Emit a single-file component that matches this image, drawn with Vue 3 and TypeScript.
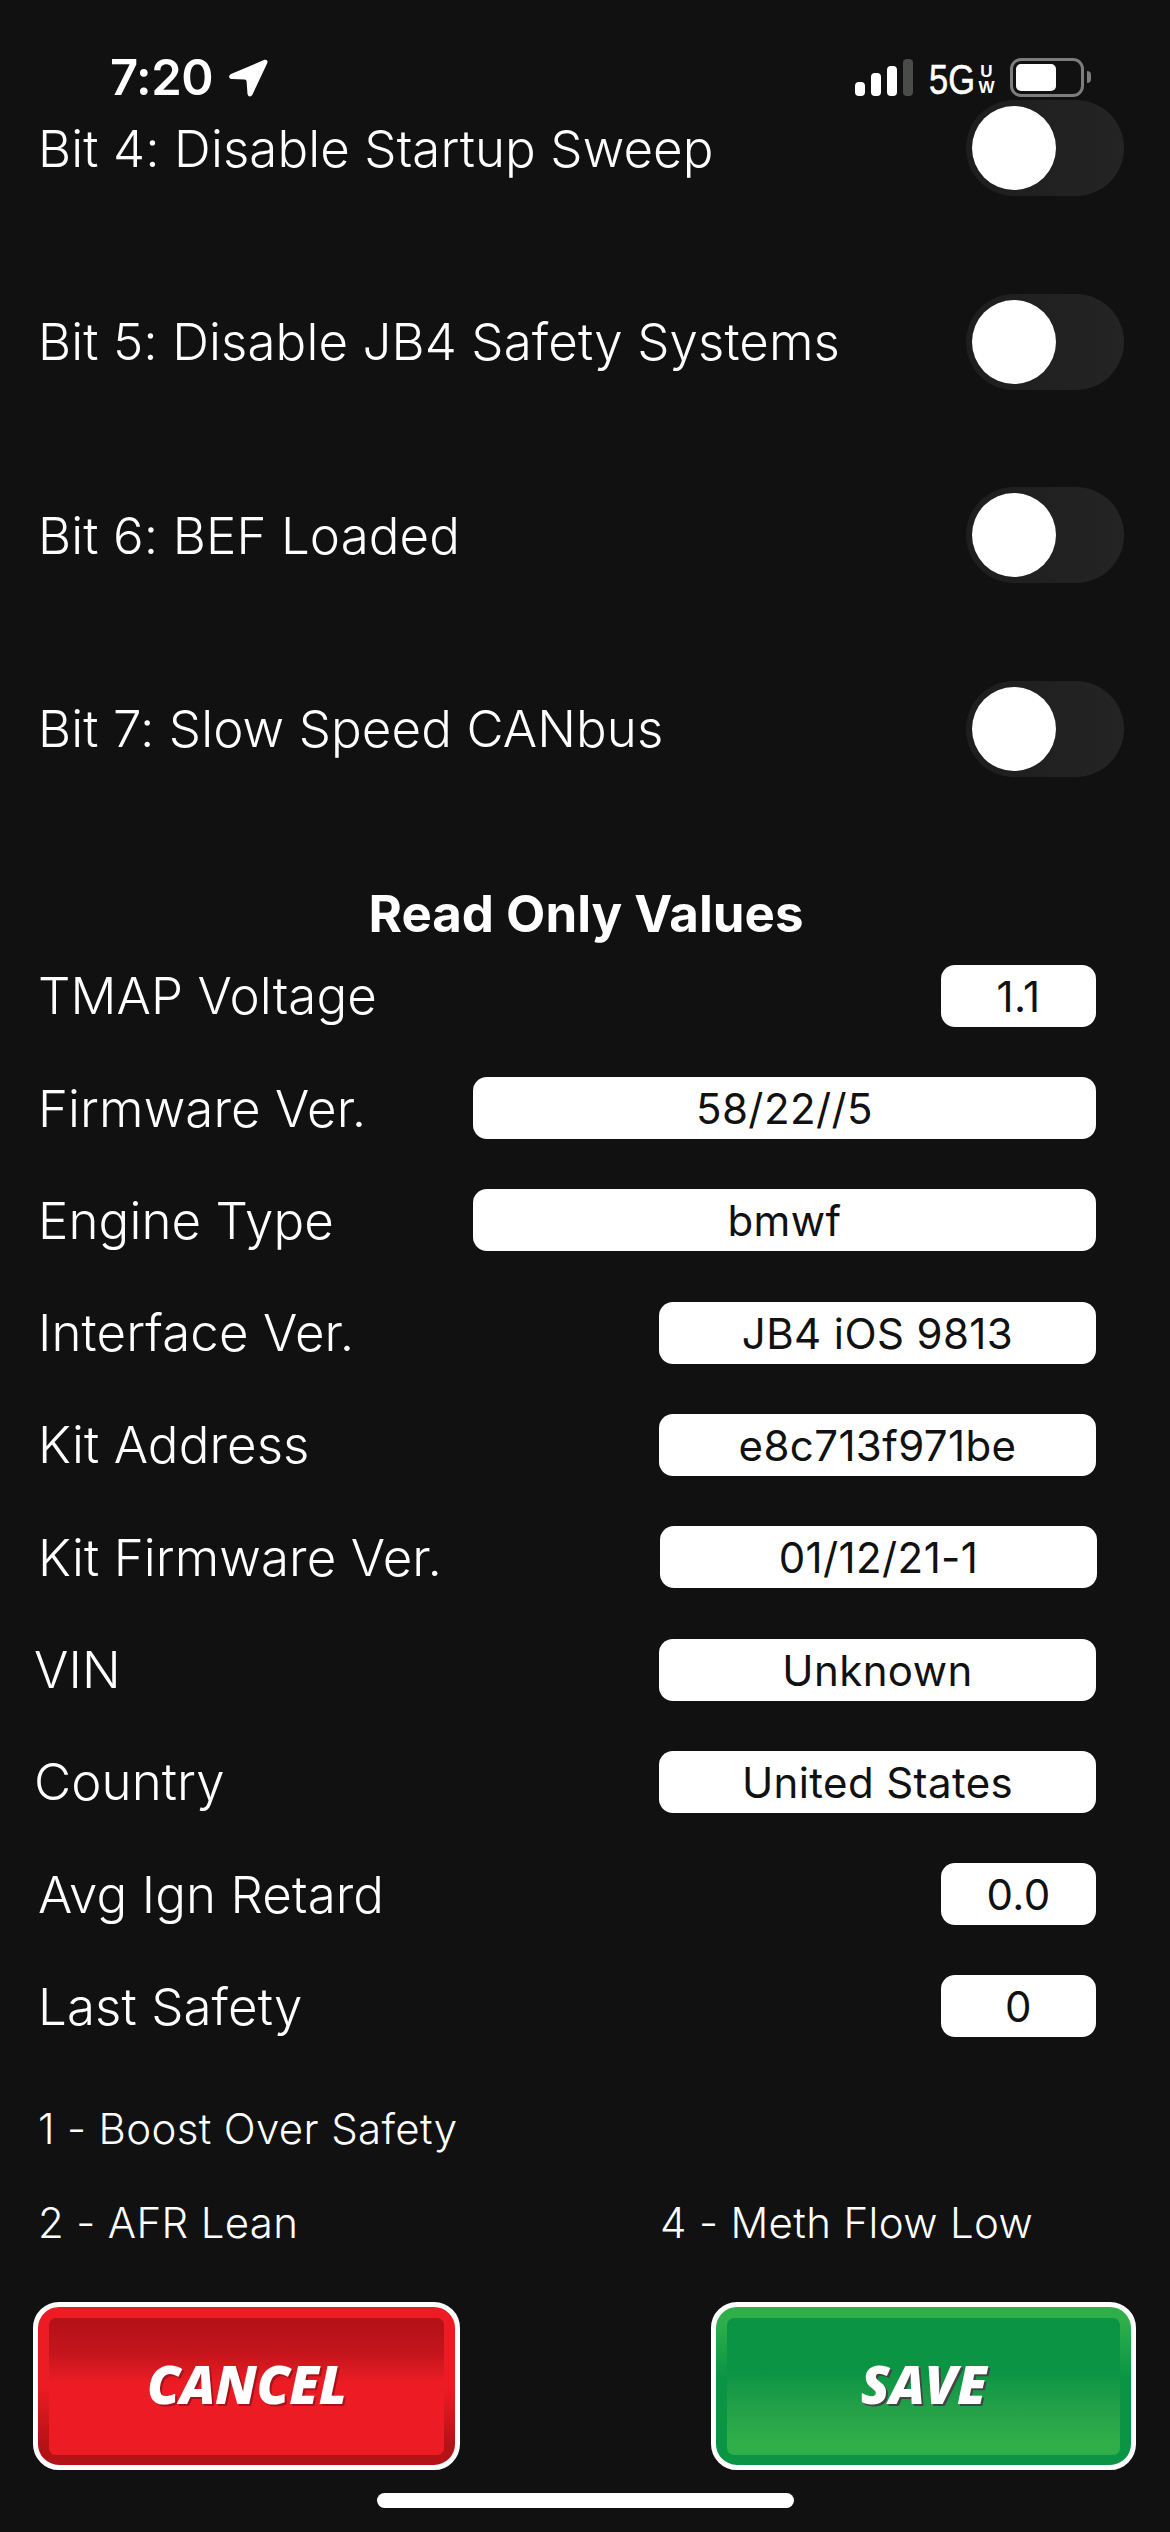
<script setup lang="ts">
interface ValueRow {
  label: string;
  value: string;
  size: "small" | "mid" | "wide";
  tight?: boolean;
  shift?: boolean;
}
const bits: string[] = [
  "Bit 4: Disable Startup Sweep",
  "Bit 5: Disable JB4 Safety Systems",
  "Bit 6: BEF Loaded",
  "Bit 7: Slow Speed CANbus",
];
const rows: ValueRow[] = [
  { label: "TMAP Voltage", value: "1.1", size: "small" },
  { label: "Firmware Ver.", value: "58/22//5", size: "wide" },
  { label: "Engine Type", value: "bmwf", size: "wide" },
  { label: "Interface Ver.", value: "JB4 iOS 9813", size: "mid" },
  { label: "Kit Address", value: "e8c713f971be", size: "mid" },
  { label: "Kit Firmware Ver.", value: "01/12/21-1", size: "mid", shift: true },
  { label: "VIN", value: "Unknown", size: "mid", tight: true },
  { label: "Country", value: "United States", size: "mid", tight: true },
  { label: "Avg Ign Retard", value: "0.0", size: "small" },
  { label: "Last Safety", value: "0", size: "small" },
];
</script>

<template>
  <div class="screen">
    <header class="status">
      <div class="time-group">
        <span class="time">7:20</span>
        <svg class="arrow" width="39" height="38" viewBox="0 0 39 38">
          <path d="M35.5 .8 L2 15 Q-.8 16.6 .5 19 Q1.2 20 3 20 L15.5 20.5 Q17.5 20.5 17.6 22.5 L18.5 35 Q19 37.5 21 37.5 Q22.5 37.5 23.5 35.5 L38.3 4 Q39.5 .5 35.5 .8 Z" fill="#fff" />
        </svg>
      </div>
      <div class="status-right">
        <div class="bars">
          <i class="bar b1"></i><i class="bar b2"></i><i class="bar b3"></i><i class="bar b4"></i>
        </div>
        <span class="net">5G</span>
        <span class="uw"><span>U</span><span>W</span></span>
        <div class="battery"><div class="battery-fill"></div></div>
        <div class="nub"></div>
      </div>
    </header>

    <section class="bits">
      <div v-for="bit in bits" :key="bit" class="bit-row">
        <span class="label">{{ bit }}</span>
        <div class="toggle"><div class="knob"></div></div>
      </div>
    </section>

    <h2 class="title">Read Only Values</h2>

    <section class="values">
      <div v-for="row in rows" :key="row.label" class="value-row" :class="{ tight: row.tight, shift: row.shift }">
        <span class="label">{{ row.label }}</span>
        <div class="pill" :class="row.size">{{ row.value }}</div>
      </div>
    </section>

    <section class="notes">
      <div class="note-row"><span>1 - Boost Over Safety</span></div>
      <div class="note-row two">
        <span>2 - AFR Lean</span>
        <span>4 - Meth Flow Low</span>
      </div>
    </section>

    <footer class="actions">
      <button class="btn cancel"><span class="face">CANCEL</span></button>
      <button class="btn save"><span class="face">SAVE</span></button>
    </footer>

    <div class="home-wrap"><div class="home"></div></div>
  </div>
</template>

<style>
html, body { margin: 0; background: #111111; }
</style>

<style scoped>
.screen {
  width: 1170px;
  height: 2532px;
  background: #111111;
  color: #fff;
  font-family: Inter, "Liberation Sans", sans-serif;
  overflow: hidden;
  box-sizing: border-box;
}
.status {
  height: 100px;
  display: flex;
  justify-content: space-between;
  box-sizing: border-box;
  padding: 58px 79px 0 110px;
}
.time-group { display: flex; align-items: flex-start; }
.time {
  font-size: 49px;
  font-weight: 600;
  line-height: 40px;
  letter-spacing: -0.5px;
}
.arrow { margin: 1px 0 0 16px; }
.status-right { display: flex; align-items: flex-start; }
.bars { display: flex; align-items: flex-end; gap: 6px; height: 37px; margin-top: 1px; }
.bar { display: block; width: 10px; background: #fff; border-radius: 4px; }
.b1 { height: 14px; }
.b2 { height: 23px; }
.b3 { height: 30px; }
.b4 { height: 37px; background: #4a4c4a; }
.net {
  font-family: "Liberation Sans", sans-serif;
  font-size: 42px;
  font-weight: 400;
  line-height: 30px;
  width: 47px;
  margin: 7px 0 0 16px;
  transform: scaleX(0.82);
  transform-origin: left center;
  -webkit-text-stroke: 0.6px #fff;
}
.uw {
  display: flex;
  flex-direction: column;
  font-family: "Liberation Sans", sans-serif;
  font-size: 17px;
  font-weight: 700;
  line-height: 16px;
  margin: 6px 0 0 2px;
  width: 17px;
  text-align: center;
}
.battery {
  width: 74px;
  height: 39px;
  margin-left: 15px;
  box-sizing: border-box;
  border: 3px solid #7d7d7d;
  border-radius: 11px;
  padding: 3px;
}
.battery-fill { width: 40px; height: 27px; background: #fff; border-radius: 5px; }
.nub {
  width: 4px;
  height: 12px;
  margin: 13px 0 0 3px;
  background: #7d7d7d;
  border-radius: 0 6px 6px 0;
}
.bits { display: flex; flex-direction: column; gap: 97.6px; padding: 0 46px 0 38px; }
.bit-row { display: flex; justify-content: space-between; align-items: center; height: 96px; }
.label { font-size: 51px; font-weight: 300; letter-spacing: 0.1px; white-space: nowrap; }
.toggle {
  width: 158px;
  height: 96px;
  box-sizing: border-box;
  padding: 6px;
  border-radius: 48px;
  background: linear-gradient(90deg, #1e1e1e, #242424);
}
.knob { width: 84px; height: 84px; border-radius: 50%; background: #fff; }
.title {
  margin: 101px 0 0;
  height: 72px;
  font-size: 51px;
  line-height: 72px;
  font-weight: 700;
  text-align: center;
  padding-left: 2px;
}
.values { display: flex; flex-direction: column; gap: 50.3px; padding: 0 74px 0 38px; margin-top: 15px; }
.value-row { display: flex; justify-content: space-between; align-items: center; height: 62px; }
.value-row.tight { margin-left: -4px; }
.value-row.shift { margin-right: -1px; }
.pill {
  height: 62px;
  line-height: 63px;
  border-radius: 14px;
  background: #fff;
  color: #111;
  text-align: center;
  font-size: 42px;
  font-weight: 400;
  letter-spacing: 0.4px;
}
.small { width: 155px; }
.mid { width: 437px; }
.wide { width: 623px; }
.notes {
  padding: 0 75px 0 38px;
  margin-top: 67px;
  font-size: 42px;
  font-weight: 300;
  letter-spacing: 0.35px;
}
.note-row { height: 50px; line-height: 50px; }
.note-row.two { display: flex; margin-top: 44px; }
.note-row.two span:first-child { width: 622px; }
.actions { display: flex; justify-content: space-between; padding: 0 34px 0 33px; margin-top: 54px; }
.btn {
  width: 427px;
  height: 168px;
  padding: 11px 11px 10px;
  box-sizing: border-box;
  border: 5px solid #fff;
  border-radius: 26px;
  display: block;
}
.save { width: 425px; }
.face {
  display: block;
  height: 100%;
  border-radius: 7px;
  font-family: "Open Sans", sans-serif;
  font-style: italic;
  font-weight: 800;
  font-size: 53px;
  letter-spacing: -0.5px;
  line-height: 132px;
  color: #fff;
  text-align: center;
}
.cancel { background: linear-gradient(#ed1c24 0 50%, #b31217 88%); }
.cancel .face {
  background: linear-gradient(#b31217 0, #c3151c 25%, #ed1c24 48%);
  text-shadow: 2px 2px 0 #a5141a;
}
.save { background: linear-gradient(#2fae4a 0 10%, #0a9444 45%, #0a9444 100%); }
.save .face {
  background: linear-gradient(#0a9444 0 38%, #23a049 65%, #2fae4a 90%);
  text-shadow: 2px 2px 0 #444;
}
.home-wrap { display: flex; justify-content: center; margin-top: 23px; }
.home { width: 417px; height: 15px; border-radius: 8px; background: #fff; }
</style>
